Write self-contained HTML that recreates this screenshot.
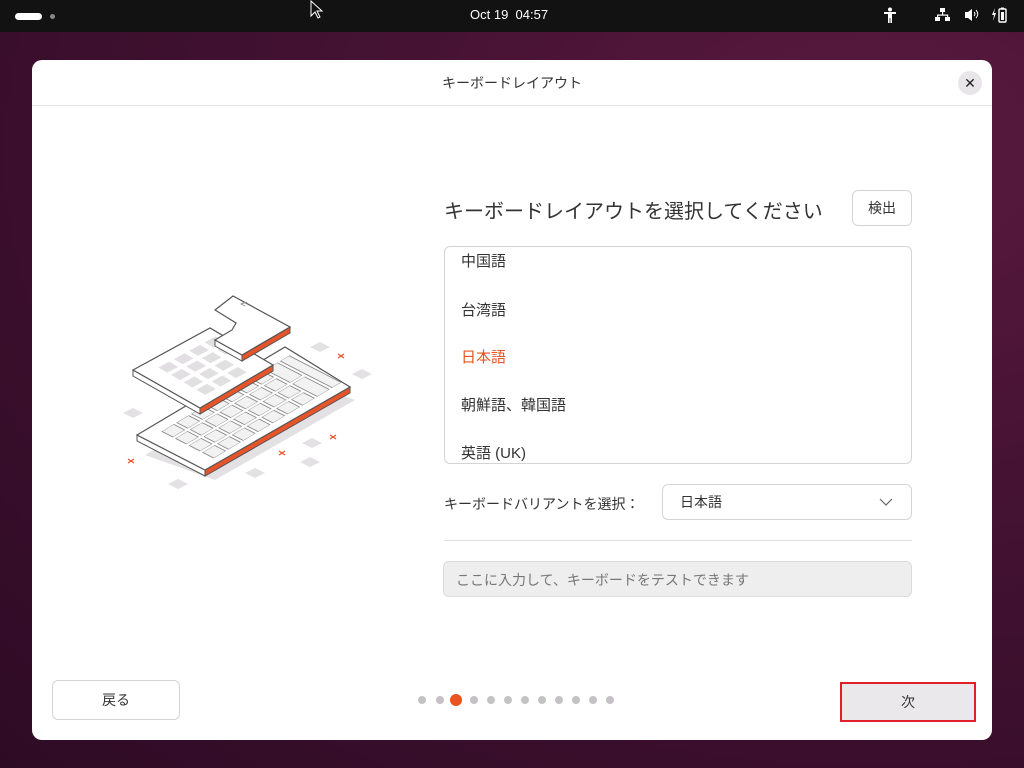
<!DOCTYPE html>
<html><head><meta charset="utf-8"><style>
*{margin:0;padding:0;box-sizing:border-box}
body{width:1024px;height:768px;overflow:hidden;position:relative;font-family:"Liberation Sans","Noto Sans CJK JP",sans-serif;
background:radial-gradient(ellipse at 85% 20%,#5a1a40 0%,#451233 40%,#2e0b25 100%)}
.top{position:absolute;left:0;top:0;width:1024px;height:32px;background:#121212;color:#fff}
.dlg{position:absolute;left:32px;top:60px;width:960px;height:680px;background:#fff;border-radius:10px;overflow:hidden}
.abs{position:absolute}
.btn{position:absolute;border:1px solid #d6d3d6;border-radius:6px;background:#fff;font-size:14px;color:#333;display:flex;align-items:center;justify-content:center}
.item{position:absolute;left:16px;font-size:15px;color:#333}
.dot{position:absolute;top:636px;width:8px;height:8px;border-radius:50%;background:#c4c2c4}
</style></head><body>
<div class="top">
  <div class="abs" style="left:15px;top:13px;width:27px;height:7px;border-radius:4px;background:#fff"></div>
  <div class="abs" style="left:50px;top:14px;width:5px;height:5px;border-radius:50%;background:#888"></div>
  <div class="abs" style="left:470px;top:7px;font-size:13px;color:#fff">Oct 19&nbsp; 04:57</div>
  <svg class="abs" style="left:880px;top:6px" width="140" height="20" viewBox="0 0 140 20">
    <g fill="#fff">
      <circle cx="10" cy="3.5" r="2"/><rect x="4" y="6" width="12" height="2"/><rect x="8" y="6" width="4" height="6"/><rect x="8" y="11" width="1.6" height="6"/><rect x="10.4" y="11" width="1.6" height="6"/>
      <rect x="60" y="2" width="5" height="4"/><rect x="62" y="6" width="1.2" height="3"/><rect x="57" y="8.5" width="11" height="1.2"/><rect x="57" y="8.5" width="1.2" height="3"/><rect x="67" y="8.5" width="1.2" height="3"/><rect x="55" y="11" width="5" height="4"/><rect x="65" y="11" width="5" height="4"/>
      <path d="M85 6h3l4-3v12l-4-3h-3z"/>
      <path d="M94 6q2 2 0 4M96 4q3.5 4 0 8" stroke="#fff" fill="none" stroke-width="1"/>
      <path d="M115 2l-3 7h2l-1 6 3-8h-2z"/>
      <rect x="119" y="3" width="7" height="13" rx="1" fill="none" stroke="#fff" stroke-width="1.4"/><rect x="121" y="1.5" width="3" height="2"/><rect x="121" y="6" width="3" height="8"/>
    </g>
  </svg>
</div>
<svg class="abs" style="left:310px;top:0" width="14" height="20" viewBox="0 0 14 20"><path d="M1 1v15l4-4 3 6 2-1-3-6h5z" fill="#111" stroke="#fff" stroke-width="1"/></svg>

<div class="dlg">
  <div class="abs" style="left:0;top:0;width:960px;height:46px;border-bottom:1px solid #e6e4e6;text-align:center;line-height:46px;font-size:14px;color:#333">キーボードレイアウト</div>
  <div class="abs" style="left:926px;top:11px;width:24px;height:24px;border-radius:50%;background:#e8e6e8;text-align:center;line-height:24px;font-size:14px;color:#222">✕</div>

  <svg class="abs" style="left:68px;top:220px" width="320" height="220" viewBox="100 280 320 220">
    <g fill="#e4e1e4">
      <polygon points="123,413 133,408 143,413 133,418"/><polygon points="168,484 178,479 188,484 178,489"/><polygon points="245,473 255,468 265,473 255,478"/>
      <polygon points="300,462 310,457 320,462 310,467"/><polygon points="302,443 312,438 322,443 312,448"/><polygon points="310,347 320,342 330,347 320,352"/><polygon points="352,374 362,369 372,374 362,379"/>
      <polygon points="145,455 285,375 355,400 215,480"/>
    </g>
    <g stroke="#e8542a" stroke-width="1.3"><path d="M128 459l6 4M134 459l-6 4M279 451l6 4M285 451l-6 4M330 435l6 4M336 435l-6 4M338 354l6 4M344 354l-6 4"/></g>
    <polygon points="137,435 137,441 205,476 205,470" fill="#fff" stroke="#555" stroke-width="1"/>
    <polygon points="205,470 350,387 350,393 205,476" fill="#e8542a" stroke="#555" stroke-width="1"/>
    <polygon points="137,435 285,347 350,387 205,470" fill="#fff" stroke="#555" stroke-width="1.2"/>
    <g transform="matrix(14.8,-8.8,6.8,3.5,137,435)" fill="#f3f2f3" stroke="#888" stroke-width="0.06">
      <rect x="1" y="1.5" width="0.8" height="1.6"/><rect x="1" y="3.5" width="0.8" height="1.6"/><rect x="1" y="5.5" width="0.8" height="1.6"/><rect x="1" y="7.5" width="0.8" height="1.6"/>
      <rect x="2" y="1.5" width="0.8" height="1.6"/><rect x="2" y="3.5" width="0.8" height="1.6"/><rect x="2" y="5.5" width="0.8" height="1.6"/><rect x="2" y="7.5" width="0.8" height="1.6"/>
      <rect x="3" y="1.5" width="0.8" height="1.6"/><rect x="3" y="3.5" width="0.8" height="1.6"/><rect x="3" y="5.5" width="0.8" height="1.6"/><rect x="3" y="7.5" width="0.8" height="1.6"/>
      <rect x="4" y="1.5" width="0.8" height="1.6"/><rect x="4" y="3.5" width="0.8" height="1.6"/><rect x="4" y="5.5" width="0.8" height="1.6"/><rect x="4" y="7.5" width="0.8" height="1.6"/>
      <rect x="5" y="1.5" width="0.8" height="1.6"/><rect x="5" y="3.5" width="0.8" height="1.6"/><rect x="5" y="5.5" width="0.8" height="1.6"/><rect x="5" y="7.5" width="0.8" height="1.6"/>
      <rect x="6" y="1.5" width="0.8" height="1.6"/><rect x="6" y="3.5" width="0.8" height="1.6"/><rect x="6" y="5.5" width="0.8" height="1.6"/><rect x="6" y="7.5" width="0.8" height="1.6"/>
      <rect x="7" y="1.5" width="0.8" height="1.6"/><rect x="7" y="3.5" width="0.8" height="1.6"/><rect x="7" y="5.5" width="0.8" height="1.6"/><rect x="7" y="7.5" width="0.8" height="1.6"/>
      <rect x="8" y="1.5" width="0.8" height="3.6"/><rect x="8" y="5.5" width="0.8" height="3.6"/>
      <rect x="9" y="1.5" width="0.6" height="7.6"/>
    </g>
    <polygon points="133,370 133,376 200,414 200,408" fill="#fff" stroke="#555" stroke-width="1"/>
    <polygon points="200,408 273,365 273,371 200,414" fill="#e8542a" stroke="#555" stroke-width="1"/>
    <polygon points="133,370 210,328 273,365 200,408" fill="#fff" stroke="#555" stroke-width="1.2"/>
    <g transform="matrix(7.7,-4.2,6.3,3.7,133,370)" fill="#e2dfe2">
      <rect x="2" y="1.6" width="1.4" height="1.4"/><rect x="2" y="3.6" width="1.4" height="1.4"/><rect x="2" y="5.6" width="1.4" height="1.4"/><rect x="2" y="7.6" width="1.4" height="1.4"/>
      <rect x="4" y="1.6" width="1.4" height="1.4"/><rect x="4" y="3.6" width="1.4" height="1.4"/><rect x="4" y="5.6" width="1.4" height="1.4"/><rect x="4" y="7.6" width="1.4" height="1.4"/>
      <rect x="6" y="1.6" width="1.4" height="1.4"/><rect x="6" y="3.6" width="1.4" height="1.4"/><rect x="6" y="5.6" width="1.4" height="1.4"/><rect x="6" y="7.6" width="1.4" height="1.4"/>
      <rect x="8" y="1.6" width="1.4" height="1.4"/><rect x="8" y="3.6" width="1.4" height="1.4"/>
    </g>
    <polygon points="215,340 215,346 242,361 242,355" fill="#fff" stroke="#555" stroke-width="1"/>
    <polygon points="242,355 290,327 290,333 242,361" fill="#e8542a" stroke="#555" stroke-width="1"/>
    <polygon points="215,310 233,296 290,327 242,355 215,340 232,330 236,323" fill="#fff" stroke="#555" stroke-width="1.2"/>
    <path d="M245 302l-4 2l4 2M241 304l6-2" stroke="#888" stroke-width="0.8" fill="none"/>
  </svg>

  <div class="abs" style="left:412px;top:135px;font-size:20px;color:#333">キーボードレイアウトを選択してください</div>
  <div class="btn" style="left:820px;top:130px;width:60px;height:36px">検出</div>
  <div class="abs" style="left:412px;top:186px;width:468px;height:218px;border:1px solid #d6d3d6;border-radius:6px;overflow:hidden">
    <div class="item" style="top:3px">中国語</div>
    <div class="item" style="top:52px">台湾語</div>
    <div class="item" style="top:99px;color:#e95420">日本語</div>
    <div class="item" style="top:147px">朝鮮語、韓国語</div>
    <div class="item" style="top:195px">英語 (UK)</div>
  </div>
  <div class="abs" style="left:412px;top:434px;font-size:14px;color:#333">キーボードバリアントを選択：</div>
  <div class="btn" style="left:630px;top:424px;width:250px;height:36px;justify-content:flex-start;padding-left:17px">日本語
    <svg class="abs" style="left:216px;top:12px" width="14" height="10"><path d="M1 2l6 6 6-6" stroke="#666" fill="none" stroke-width="1.2"/></svg></div>
  <div class="abs" style="left:412px;top:480px;width:468px;height:1px;background:#e2dfe2"></div>
  <div class="abs" style="left:411px;top:501px;width:469px;height:36px;background:#efeeef;border:1px solid #dcdadc;border-radius:6px;font-size:14px;color:#777;line-height:36px;padding-left:12px">ここに入力して、キーボードをテストできます</div>

  <div class="btn" style="left:20px;top:620px;width:128px;height:40px">戻る</div>
  <div class="dot" style="left:386px"></div><div class="dot" style="left:404px"></div>
  <div class="abs" style="left:418px;top:634px;width:12px;height:12px;border-radius:50%;background:#e95420"></div>
  <div class="dot" style="left:438px"></div><div class="dot" style="left:455px"></div><div class="dot" style="left:472px"></div><div class="dot" style="left:489px"></div><div class="dot" style="left:506px"></div><div class="dot" style="left:523px"></div><div class="dot" style="left:540px"></div><div class="dot" style="left:557px"></div><div class="dot" style="left:574px"></div>
  <div class="abs" style="left:808px;top:622px;width:136px;height:40px;border:2px solid #e0202a;background:#ebe8ec;font-size:14px;color:#333;display:flex;align-items:center;justify-content:center">次</div>
</div>
</body></html>
